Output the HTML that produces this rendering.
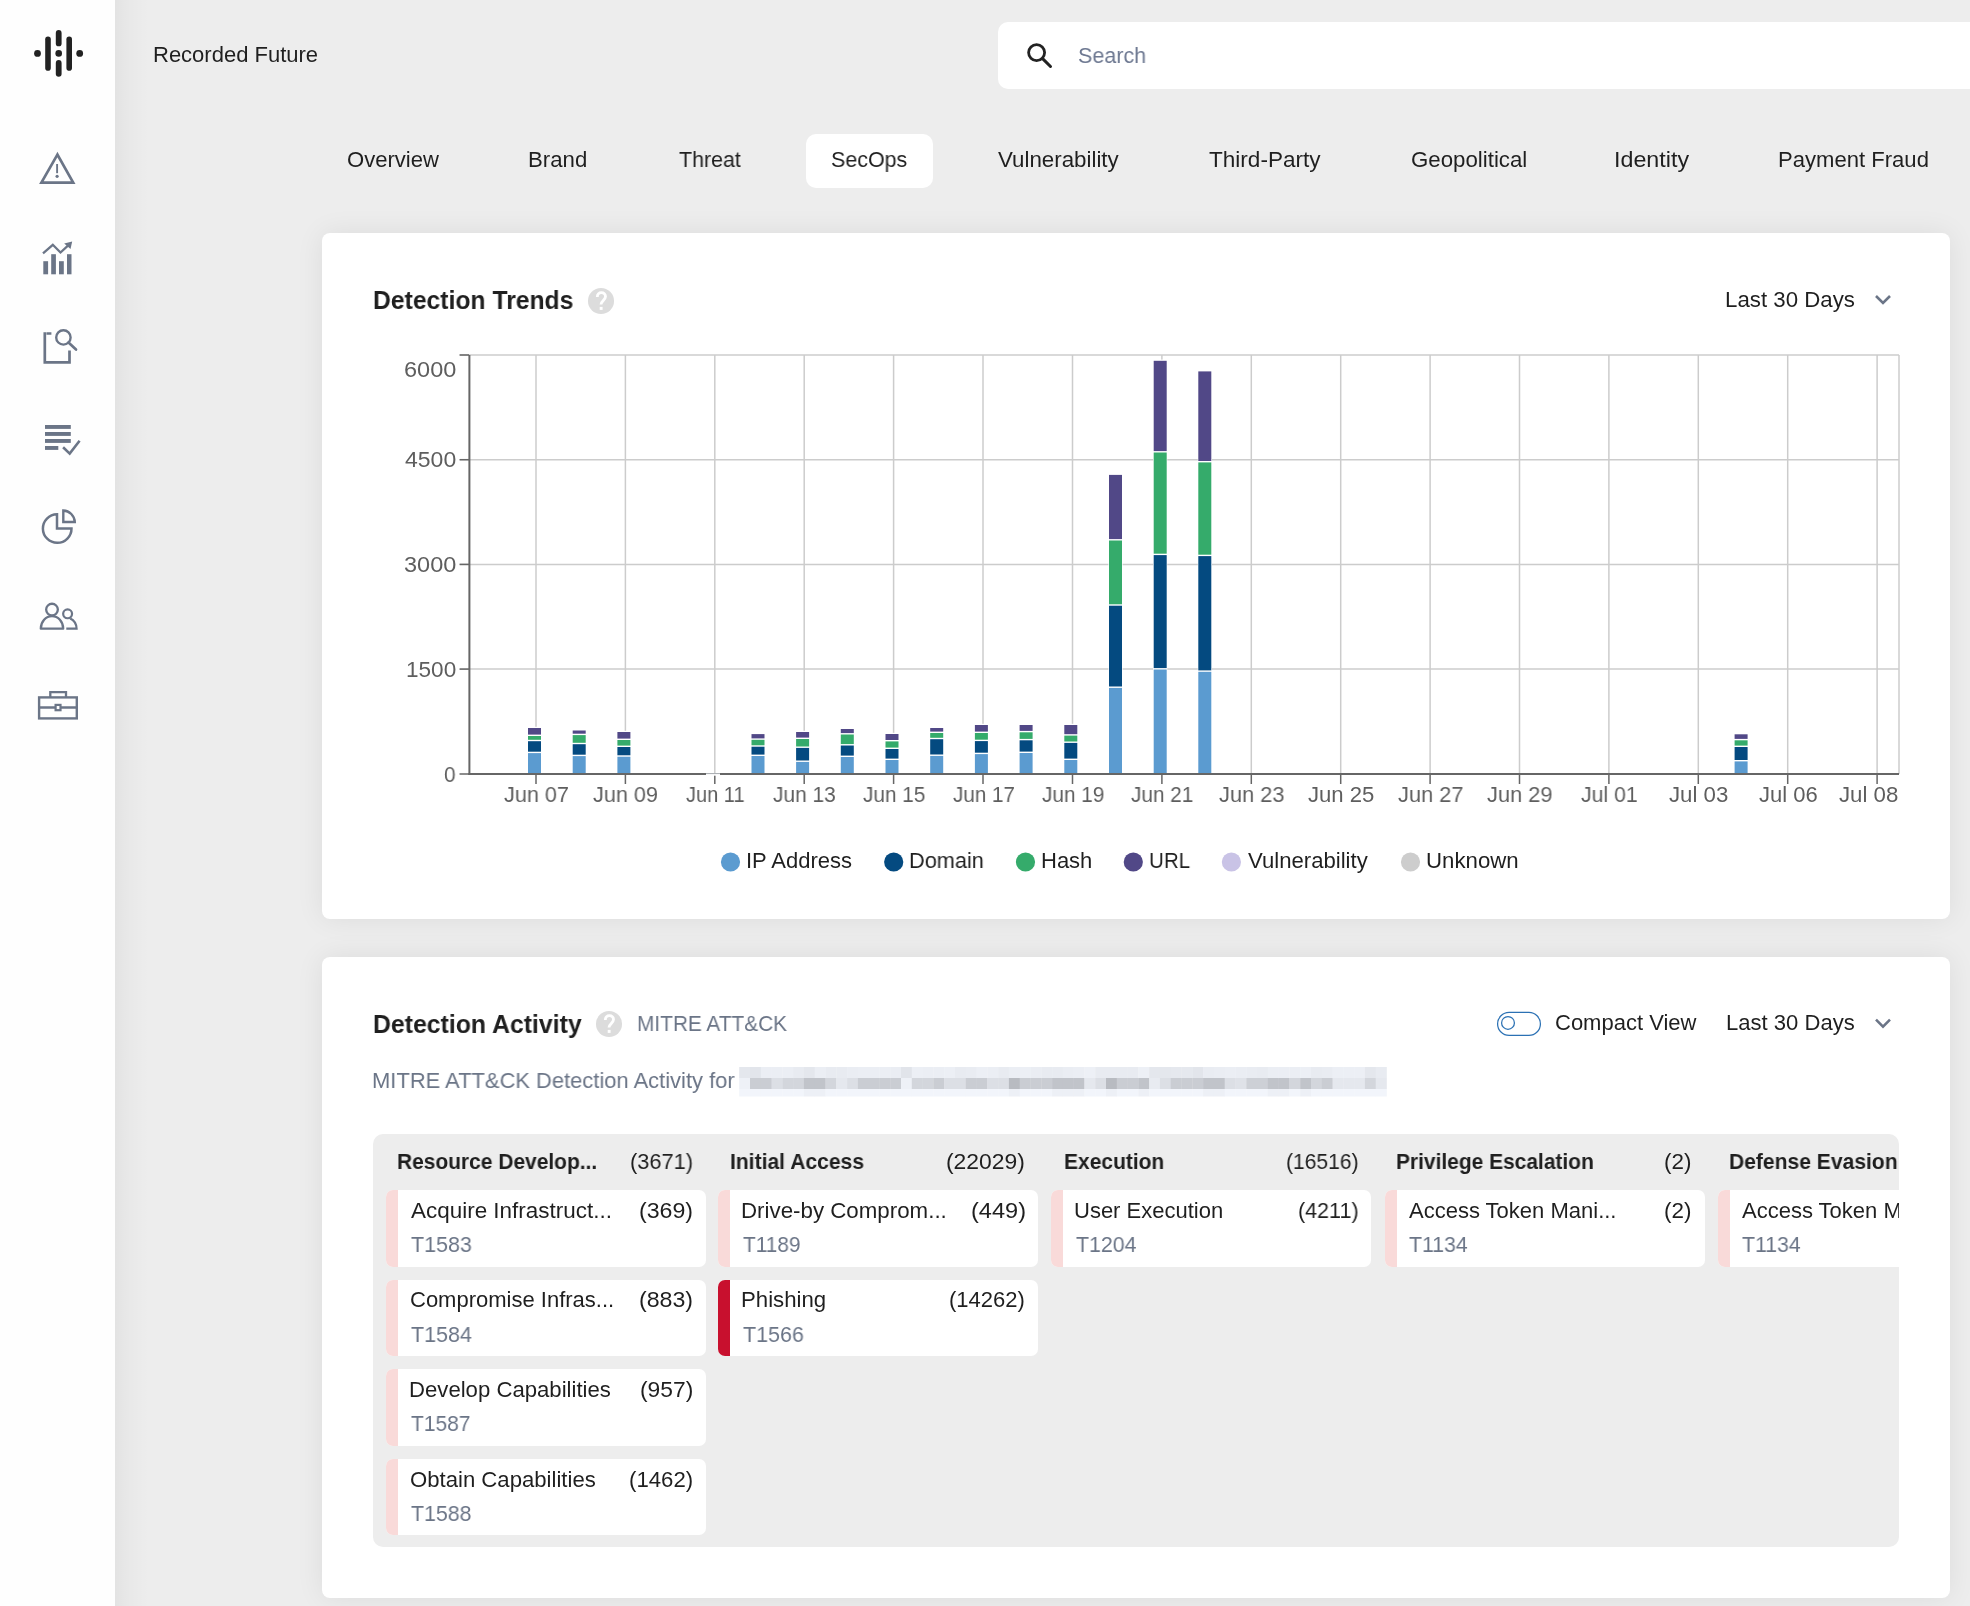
<!DOCTYPE html><html><head><meta charset='utf-8'><style>
*{margin:0;padding:0;box-sizing:border-box}
html,body{width:1970px;height:1606px;overflow:hidden}
body{background:#ededed;font-family:"Liberation Sans",sans-serif;position:relative}
.abs{position:absolute}
.t{position:absolute;white-space:nowrap;line-height:1;transform-origin:0 0;will-change:transform}
#side{position:absolute;left:0;top:0;width:115px;height:1606px;background:#fefefe}
#sideshadow{position:absolute;left:115px;top:0;width:34px;height:1606px;background:linear-gradient(to right,rgba(0,0,0,0.045),rgba(0,0,0,0.02) 40%,rgba(0,0,0,0))}
#search{position:absolute;left:998px;top:22px;width:990px;height:67px;background:#fff;border-radius:10px}
#tabsel{position:absolute;left:806.4px;top:134.2px;width:126.2px;height:53.9px;background:#fff;border-radius:10px}
.panel{position:absolute;left:322px;width:1628px;background:#fff;border-radius:8px;box-shadow:0 0 28px rgba(0,0,0,0.075)}
.help{position:absolute;width:26px;height:26px;border-radius:50%;background:#dcdcdc;color:#fff;font:bold 19px/26px "Liberation Sans",sans-serif;text-align:center}
#matrix{position:absolute;left:373px;top:1134.2px;width:1525.5px;height:413.2px;background:#ededed;border-radius:10px;overflow:hidden}
.card{position:absolute;width:320px;height:76.5px;background:#fff;border-radius:7px;overflow:hidden}
.card .bar{position:absolute;left:0;top:0;bottom:0;width:12px}
#blur{position:absolute;left:739px;top:1064px;width:648px;height:34px}
</style></head><body>
<div id=side></div><div id=sideshadow></div>

<svg class=abs style='left:0;top:0' width='115' height='760' viewBox='0 0 115 760'>
 <g fill='#222'>
  <circle cx='37.5' cy='53.4' r='3.4'/>
  <rect x='45.2' y='36.4' width='5.6' height='34.3' rx='2.8'/>
  <rect x='55.8' y='30' width='5.8' height='16.3' rx='2.9'/>
  <circle cx='58.7' cy='53.4' r='3.3'/>
  <rect x='55.8' y='60.1' width='5.8' height='16.6' rx='2.9'/>
  <rect x='66.4' y='36.4' width='5.6' height='34.3' rx='2.8'/>
  <circle cx='79.7' cy='53.4' r='3.4'/>
 </g>
 <g fill='none' stroke='#6b7587' stroke-width='2.7'>
  <path d='M57.4 154.6 L41.4 182.6 L73.2 182.6 Z' stroke-linejoin='miter'/>
  <line x1='57.1' y1='164' x2='57.1' y2='173.2' stroke-width='1.9'/>
  <polyline points='43,253.3 52.8,244.8 60.5,252.5 68.5,245.2' stroke-width='2.3'/>
  <path d='M46.5 333.5 H51.4 M44.8 332.2 V362.3 H69.5 V350.5'/>
  <circle cx='63.4' cy='337.4' r='7.2' stroke-width='2.4'/>
  <line x1='68.5' y1='342.5' x2='76' y2='349.5' stroke-linecap='round'/>
  <path d='M57 514.2 A14.3 14.3 0 1 0 71.5 528.4 H57 Z' stroke-width='2.5'/>
  <path d='M63.3 510.5 A12 12 0 0 1 74.8 522 H63.3 Z' stroke-width='2.4'/>
  <circle cx='52' cy='609.6' r='5.85' stroke-width='2.3'/>
  <path d='M40.8 628.7 A11.2 12.6 0 0 1 63.2 628.7 Z' stroke-width='2.3' stroke-linejoin='round'/>
  <circle cx='67.6' cy='613.8' r='4.45' stroke-width='2.2'/>
  <path d='M66.3 628.7 H76.6 A10.5 11.5 0 0 0 70.2 618.6' stroke-width='2.2'/>
  <rect x='39.1' y='697.4' width='37.7' height='21' stroke-width='2.4'/>
  <path d='M50.3 697.4 V692.1 H66 V697.4' stroke-width='2.3'/>
  <line x1='39.1' y1='707.5' x2='76.8' y2='707.5' stroke-width='2.3'/>
  <rect x='55.6' y='704.9' width='4.9' height='5.3' fill='#fff' stroke-width='2.2'/>
 </g>
 <g fill='#6b7587'>
  <circle cx='57.1' cy='176.3' r='1.6'/>
  <path d='M64.2 243.5 L72.2 241.6 L70.5 249 Z'/>
  <rect x='43.3' y='261.2' width='4.8' height='13.1'/>
  <rect x='51.2' y='254.2' width='4.7' height='20.1'/>
  <rect x='59' y='261.2' width='4.8' height='13.1'/>
  <rect x='67' y='254.2' width='4.5' height='20.1'/>
  <rect x='45' y='425' width='25.8' height='3.9'/>
  <rect x='45' y='432' width='25.8' height='3.9'/>
  <rect x='45' y='439' width='25.8' height='3.9'/>
  <rect x='45' y='446' width='13.3' height='3.9'/>
 </g>
 <polyline points='63.1,447.3 69.7,453.6 79.6,440.8' fill='none' stroke='#6b7587' stroke-width='2.6'/>
</svg>

<div id=search></div>
<svg class=abs style='left:1024.3px;top:41.3px' width='32' height='28' viewBox='0 0 32 28'>
 <circle cx='12.6' cy='11.6' r='8' fill='none' stroke='#222' stroke-width='2.8'/>
 <line x1='18.6' y1='17.6' x2='26.5' y2='25.5' stroke='#222' stroke-width='3' stroke-linecap='round'/>
</svg>
<div id=tabsel></div>
<div class=panel style='top:233px;height:686px'></div>
<div class=panel style='top:957px;height:641px'></div>
<svg class=abs style='left:585.8px;top:285.5px' width='30' height='30' viewBox='-15 -15 30 30'><circle r='13.05' fill='#dcdcdc'/><path d='M-3.7 -4.1 C-3.7 -6.9 -1.8 -8.4 0.4 -8.4 C2.8 -8.4 4.5 -6.8 4.5 -4.4 C4.5 -0.9 0 0 0 3.6' fill='none' stroke='#fff' stroke-width='2.8'/><rect x='-1.3' y='5.9' width='2.9' height='3' fill='#fff'/></svg>
<svg class=abs style='left:594.4px;top:1009.4000000000001px' width='30' height='30' viewBox='-15 -15 30 30'><circle r='13.05' fill='#dcdcdc'/><path d='M-3.7 -4.1 C-3.7 -6.9 -1.8 -8.4 0.4 -8.4 C2.8 -8.4 4.5 -6.8 4.5 -4.4 C4.5 -0.9 0 0 0 3.6' fill='none' stroke='#fff' stroke-width='2.8'/><rect x='-1.3' y='5.9' width='2.9' height='3' fill='#fff'/></svg>
<svg class=abs style='left:1870px;top:290px' width='26' height='20' viewBox='0 0 26 20'><polyline points='6,6 13,13 20,6' fill='none' stroke='#6b7587' stroke-width='2.6'/></svg>
<svg class=abs style='left:1870px;top:1013px' width='26' height='20' viewBox='0 0 26 20'><polyline points='6,6.6 13,13.6 20,6.6' fill='none' stroke='#6b7587' stroke-width='2.6'/></svg>
<svg class=abs style='left:1490px;top:1005px' width='60' height='40' viewBox='0 0 60 40'>
 <rect x='7.6' y='7.4' width='42.8' height='23' rx='11.5' fill='#fff' stroke='#2b71b4' stroke-width='1.25'/>
 <circle cx='18' cy='17.9' r='6.4' fill='#fff' stroke='#2b71b4' stroke-width='1.25'/>
</svg>
<svg class=abs style='left:0;top:0' width='1970' height='1606' viewBox='0 0 1970 1606'><line x1='460' y1='355' x2='1899' y2='355' stroke='#cccccc' stroke-width='1.5'/><line x1='460' y1='459.7' x2='1899' y2='459.7' stroke='#cccccc' stroke-width='1.5'/><line x1='460' y1='564.4' x2='1899' y2='564.4' stroke='#cccccc' stroke-width='1.5'/><line x1='460' y1='669.1' x2='1899' y2='669.1' stroke='#cccccc' stroke-width='1.5'/><line x1='536.0' y1='355' x2='536.0' y2='774' stroke='#cccccc' stroke-width='1.5'/><line x1='625.4' y1='355' x2='625.4' y2='774' stroke='#cccccc' stroke-width='1.5'/><line x1='714.8' y1='355' x2='714.8' y2='774' stroke='#cccccc' stroke-width='1.5'/><line x1='804.2' y1='355' x2='804.2' y2='774' stroke='#cccccc' stroke-width='1.5'/><line x1='893.6' y1='355' x2='893.6' y2='774' stroke='#cccccc' stroke-width='1.5'/><line x1='983.0' y1='355' x2='983.0' y2='774' stroke='#cccccc' stroke-width='1.5'/><line x1='1072.5' y1='355' x2='1072.5' y2='774' stroke='#cccccc' stroke-width='1.5'/><line x1='1161.9' y1='355' x2='1161.9' y2='774' stroke='#cccccc' stroke-width='1.5'/><line x1='1251.3' y1='355' x2='1251.3' y2='774' stroke='#cccccc' stroke-width='1.5'/><line x1='1340.7' y1='355' x2='1340.7' y2='774' stroke='#cccccc' stroke-width='1.5'/><line x1='1430.1' y1='355' x2='1430.1' y2='774' stroke='#cccccc' stroke-width='1.5'/><line x1='1519.5' y1='355' x2='1519.5' y2='774' stroke='#cccccc' stroke-width='1.5'/><line x1='1608.9' y1='355' x2='1608.9' y2='774' stroke='#cccccc' stroke-width='1.5'/><line x1='1698.3' y1='355' x2='1698.3' y2='774' stroke='#cccccc' stroke-width='1.5'/><line x1='1787.7' y1='355' x2='1787.7' y2='774' stroke='#cccccc' stroke-width='1.5'/><line x1='1877.1' y1='355' x2='1877.1' y2='774' stroke='#cccccc' stroke-width='1.5'/><line x1='1899' y1='355' x2='1899' y2='774' stroke='#cccccc' stroke-width='1.5'/><rect x='527.4' y='726.8' width='14.2' height='47.2' fill='#fff'/><rect x='528.0' y='753.1' width='13' height='20.9' fill='#5b9bd0'/><rect x='528.0' y='741.2' width='13' height='10.5' fill='#044a80'/><rect x='528.0' y='736.0' width='13' height='3.8' fill='#35ab6b'/><rect x='528.0' y='728.0' width='13' height='6.6' fill='#514887'/><rect x='572.1' y='729.3' width='14.2' height='44.7' fill='#fff'/><rect x='572.7' y='756.1' width='13' height='17.9' fill='#5b9bd0'/><rect x='572.7' y='744.2' width='13' height='10.5' fill='#044a80'/><rect x='572.7' y='735.1' width='13' height='7.7' fill='#35ab6b'/><rect x='572.7' y='730.5' width='13' height='3.2' fill='#514887'/><rect x='616.8' y='730.8' width='14.2' height='43.2' fill='#fff'/><rect x='617.4' y='756.7' width='13' height='17.3' fill='#5b9bd0'/><rect x='617.4' y='747.0' width='13' height='8.3' fill='#044a80'/><rect x='617.4' y='740.0' width='13' height='5.6' fill='#35ab6b'/><rect x='617.4' y='732.0' width='13' height='6.6' fill='#514887'/><rect x='750.9' y='732.9' width='14.2' height='41.1' fill='#fff'/><rect x='751.5' y='756.0' width='13' height='18.0' fill='#5b9bd0'/><rect x='751.5' y='746.7' width='13' height='7.9' fill='#044a80'/><rect x='751.5' y='739.8' width='13' height='5.5' fill='#35ab6b'/><rect x='751.5' y='734.1' width='13' height='4.3' fill='#514887'/><rect x='795.5' y='730.8' width='14.2' height='43.2' fill='#fff'/><rect x='796.1' y='761.9' width='13' height='12.1' fill='#5b9bd0'/><rect x='796.1' y='747.9' width='13' height='12.6' fill='#044a80'/><rect x='796.1' y='739.0' width='13' height='7.5' fill='#35ab6b'/><rect x='796.1' y='732.0' width='13' height='5.6' fill='#514887'/><rect x='840.2' y='727.8' width='14.2' height='46.2' fill='#fff'/><rect x='840.8' y='757.0' width='13' height='17.0' fill='#5b9bd0'/><rect x='840.8' y='745.5' width='13' height='10.1' fill='#044a80'/><rect x='840.8' y='734.5' width='13' height='9.6' fill='#35ab6b'/><rect x='840.8' y='729.0' width='13' height='4.1' fill='#514887'/><rect x='884.9' y='732.8' width='14.2' height='41.2' fill='#fff'/><rect x='885.5' y='760.0' width='13' height='14.0' fill='#5b9bd0'/><rect x='885.5' y='749.0' width='13' height='9.6' fill='#044a80'/><rect x='885.5' y='741.4' width='13' height='6.2' fill='#35ab6b'/><rect x='885.5' y='734.0' width='13' height='6.0' fill='#514887'/><rect x='929.6' y='726.8' width='14.2' height='47.2' fill='#fff'/><rect x='930.2' y='755.9' width='13' height='18.1' fill='#5b9bd0'/><rect x='930.2' y='739.2' width='13' height='15.3' fill='#044a80'/><rect x='930.2' y='733.0' width='13' height='4.8' fill='#35ab6b'/><rect x='930.2' y='728.0' width='13' height='3.6' fill='#514887'/><rect x='974.3' y='723.8' width='14.2' height='50.2' fill='#fff'/><rect x='974.9' y='754.1' width='13' height='19.9' fill='#5b9bd0'/><rect x='974.9' y='741.1' width='13' height='11.6' fill='#044a80'/><rect x='974.9' y='733.0' width='13' height='6.7' fill='#35ab6b'/><rect x='974.9' y='725.0' width='13' height='6.6' fill='#514887'/><rect x='1019.0' y='723.8' width='14.2' height='50.2' fill='#fff'/><rect x='1019.6' y='753.0' width='13' height='21.0' fill='#5b9bd0'/><rect x='1019.6' y='740.3' width='13' height='11.3' fill='#044a80'/><rect x='1019.6' y='732.3' width='13' height='6.6' fill='#35ab6b'/><rect x='1019.6' y='725.0' width='13' height='5.9' fill='#514887'/><rect x='1063.7' y='723.8' width='14.2' height='50.2' fill='#fff'/><rect x='1064.3' y='760.0' width='13' height='14.0' fill='#5b9bd0'/><rect x='1064.3' y='742.9' width='13' height='15.7' fill='#044a80'/><rect x='1064.3' y='735.6' width='13' height='5.9' fill='#35ab6b'/><rect x='1064.3' y='725.0' width='13' height='9.2' fill='#514887'/><rect x='1108.4' y='473.7' width='14.2' height='300.3' fill='#fff'/><rect x='1109.0' y='687.9' width='13' height='86.1' fill='#5b9bd0'/><rect x='1109.0' y='605.7' width='13' height='80.8' fill='#044a80'/><rect x='1109.0' y='540.5' width='13' height='63.8' fill='#35ab6b'/><rect x='1109.0' y='474.9' width='13' height='64.2' fill='#514887'/><rect x='1153.1' y='359.6' width='14.2' height='414.4' fill='#fff'/><rect x='1153.7' y='669.5' width='13' height='104.5' fill='#5b9bd0'/><rect x='1153.7' y='555.1' width='13' height='113.0' fill='#044a80'/><rect x='1153.7' y='452.5' width='13' height='101.2' fill='#35ab6b'/><rect x='1153.7' y='360.8' width='13' height='90.3' fill='#514887'/><rect x='1197.8' y='370.2' width='14.2' height='403.8' fill='#fff'/><rect x='1198.3' y='671.8' width='13' height='102.2' fill='#5b9bd0'/><rect x='1198.3' y='556.1' width='13' height='114.3' fill='#044a80'/><rect x='1198.3' y='462.4' width='13' height='92.3' fill='#35ab6b'/><rect x='1198.3' y='371.4' width='13' height='89.6' fill='#514887'/><rect x='1734.0' y='733.1' width='14.2' height='40.9' fill='#fff'/><rect x='1734.6' y='761.4' width='13' height='12.6' fill='#5b9bd0'/><rect x='1734.6' y='747.0' width='13' height='13.0' fill='#044a80'/><rect x='1734.6' y='740.3' width='13' height='5.3' fill='#35ab6b'/><rect x='1734.6' y='734.3' width='13' height='4.6' fill='#514887'/><line x1='469.4' y1='355' x2='469.4' y2='775' stroke='#666666' stroke-width='2'/><line x1='468.5' y1='774' x2='1899' y2='774' stroke='#666666' stroke-width='2'/><line x1='459.5' y1='355' x2='469' y2='355' stroke='#666666' stroke-width='1.5'/><line x1='459.5' y1='459.7' x2='469' y2='459.7' stroke='#666666' stroke-width='1.5'/><line x1='459.5' y1='564.4' x2='469' y2='564.4' stroke='#666666' stroke-width='1.5'/><line x1='459.5' y1='669.1' x2='469' y2='669.1' stroke='#666666' stroke-width='1.5'/><line x1='459.5' y1='774' x2='469' y2='774' stroke='#666666' stroke-width='1.5'/><line x1='536.0' y1='775' x2='536.0' y2='784' stroke='#666666' stroke-width='1.5'/><line x1='625.4' y1='775' x2='625.4' y2='784' stroke='#666666' stroke-width='1.5'/><line x1='714.8' y1='775' x2='714.8' y2='784' stroke='#666666' stroke-width='1.5'/><line x1='804.2' y1='775' x2='804.2' y2='784' stroke='#666666' stroke-width='1.5'/><line x1='893.6' y1='775' x2='893.6' y2='784' stroke='#666666' stroke-width='1.5'/><line x1='983.0' y1='775' x2='983.0' y2='784' stroke='#666666' stroke-width='1.5'/><line x1='1072.5' y1='775' x2='1072.5' y2='784' stroke='#666666' stroke-width='1.5'/><line x1='1161.9' y1='775' x2='1161.9' y2='784' stroke='#666666' stroke-width='1.5'/><line x1='1251.3' y1='775' x2='1251.3' y2='784' stroke='#666666' stroke-width='1.5'/><line x1='1340.7' y1='775' x2='1340.7' y2='784' stroke='#666666' stroke-width='1.5'/><line x1='1430.1' y1='775' x2='1430.1' y2='784' stroke='#666666' stroke-width='1.5'/><line x1='1519.5' y1='775' x2='1519.5' y2='784' stroke='#666666' stroke-width='1.5'/><line x1='1608.9' y1='775' x2='1608.9' y2='784' stroke='#666666' stroke-width='1.5'/><line x1='1698.3' y1='775' x2='1698.3' y2='784' stroke='#666666' stroke-width='1.5'/><line x1='1787.7' y1='775' x2='1787.7' y2='784' stroke='#666666' stroke-width='1.5'/><line x1='1877.1' y1='775' x2='1877.1' y2='784' stroke='#666666' stroke-width='1.5'/><rect x='706' y='773.3' width='14' height='2.4' fill='#fff'/><line x1='706' y1='773.6' x2='720' y2='773.6' stroke='#a3a8ad' stroke-width='0.9'/><circle cx='730.5' cy='862' r='9.6' fill='#5b9bd0'/><circle cx='893.7' cy='862' r='9.6' fill='#044a80'/><circle cx='1025.5' cy='862' r='9.6' fill='#35ab6b'/><circle cx='1133.3' cy='862' r='9.6' fill='#514887'/><circle cx='1231.4' cy='862' r='9.6' fill='#c9c3e6'/><circle cx='1410.5' cy='862' r='9.6' fill='#cdcdcd'/></svg>
<svg class=abs style='left:0;top:0' width='1970' height='1606'><rect x='739.2' y='1067' width='11.1' height='11.1' fill='rgb(228,231,237)'/><rect x='739.2' y='1078' width='11.1' height='11' fill='rgb(238,241,247)'/><rect x='739.2' y='1089' width='11.1' height='7.5' fill='rgb(242,245,251)'/><rect x='750.0' y='1067' width='11.1' height='11.1' fill='rgb(226,229,235)'/><rect x='750.0' y='1078' width='11.1' height='11' fill='rgb(202,205,211)'/><rect x='750.0' y='1089' width='11.1' height='7.5' fill='rgb(242,245,251)'/><rect x='760.8' y='1067' width='11.1' height='11.1' fill='rgb(235,238,244)'/><rect x='760.8' y='1078' width='11.1' height='11' fill='rgb(202,205,211)'/><rect x='760.8' y='1089' width='11.1' height='7.5' fill='rgb(242,245,251)'/><rect x='771.6' y='1067' width='11.1' height='11.1' fill='rgb(235,238,244)'/><rect x='771.6' y='1078' width='11.1' height='11' fill='rgb(220,223,229)'/><rect x='771.6' y='1089' width='11.1' height='7.5' fill='rgb(242,245,251)'/><rect x='782.4' y='1067' width='11.1' height='11.1' fill='rgb(235,238,244)'/><rect x='782.4' y='1078' width='11.1' height='11' fill='rgb(211,214,220)'/><rect x='782.4' y='1089' width='11.1' height='7.5' fill='rgb(242,245,251)'/><rect x='793.1' y='1067' width='11.1' height='11.1' fill='rgb(232,235,241)'/><rect x='793.1' y='1078' width='11.1' height='11' fill='rgb(211,214,220)'/><rect x='793.1' y='1089' width='11.1' height='7.5' fill='rgb(242,245,251)'/><rect x='803.9' y='1067' width='11.1' height='11.1' fill='rgb(228,231,237)'/><rect x='803.9' y='1078' width='11.1' height='11' fill='rgb(193,196,202)'/><rect x='803.9' y='1089' width='11.1' height='7.5' fill='rgb(237,240,246)'/><rect x='814.7' y='1067' width='11.1' height='11.1' fill='rgb(235,238,244)'/><rect x='814.7' y='1078' width='11.1' height='11' fill='rgb(193,196,202)'/><rect x='814.7' y='1089' width='11.1' height='7.5' fill='rgb(237,240,246)'/><rect x='825.5' y='1067' width='11.1' height='11.1' fill='rgb(232,235,241)'/><rect x='825.5' y='1078' width='11.1' height='11' fill='rgb(211,214,220)'/><rect x='825.5' y='1089' width='11.1' height='7.5' fill='rgb(242,245,251)'/><rect x='836.3' y='1067' width='11.1' height='11.1' fill='rgb(232,235,241)'/><rect x='836.3' y='1078' width='11.1' height='11' fill='rgb(229,232,238)'/><rect x='836.3' y='1089' width='11.1' height='7.5' fill='rgb(242,245,251)'/><rect x='847.1' y='1067' width='11.1' height='11.1' fill='rgb(234,237,243)'/><rect x='847.1' y='1078' width='11.1' height='11' fill='rgb(220,223,229)'/><rect x='847.1' y='1089' width='11.1' height='7.5' fill='rgb(242,245,251)'/><rect x='857.9' y='1067' width='11.1' height='11.1' fill='rgb(235,238,244)'/><rect x='857.9' y='1078' width='11.1' height='11' fill='rgb(202,205,211)'/><rect x='857.9' y='1089' width='11.1' height='7.5' fill='rgb(242,245,251)'/><rect x='868.7' y='1067' width='11.1' height='11.1' fill='rgb(235,238,244)'/><rect x='868.7' y='1078' width='11.1' height='11' fill='rgb(202,205,211)'/><rect x='868.7' y='1089' width='11.1' height='7.5' fill='rgb(242,245,251)'/><rect x='879.4' y='1067' width='11.1' height='11.1' fill='rgb(235,238,244)'/><rect x='879.4' y='1078' width='11.1' height='11' fill='rgb(202,205,211)'/><rect x='879.4' y='1089' width='11.1' height='7.5' fill='rgb(242,245,251)'/><rect x='890.2' y='1067' width='11.1' height='11.1' fill='rgb(234,237,243)'/><rect x='890.2' y='1078' width='11.1' height='11' fill='rgb(202,205,211)'/><rect x='890.2' y='1089' width='11.1' height='7.5' fill='rgb(242,245,251)'/><rect x='901.0' y='1067' width='11.1' height='11.1' fill='rgb(225,228,234)'/><rect x='901.0' y='1078' width='11.1' height='11' fill='rgb(238,241,247)'/><rect x='901.0' y='1089' width='11.1' height='7.5' fill='rgb(242,245,251)'/><rect x='911.8' y='1067' width='11.1' height='11.1' fill='rgb(236,239,245)'/><rect x='911.8' y='1078' width='11.1' height='11' fill='rgb(211,214,220)'/><rect x='911.8' y='1089' width='11.1' height='7.5' fill='rgb(242,245,251)'/><rect x='922.6' y='1067' width='11.1' height='11.1' fill='rgb(235,238,244)'/><rect x='922.6' y='1078' width='11.1' height='11' fill='rgb(211,214,220)'/><rect x='922.6' y='1089' width='11.1' height='7.5' fill='rgb(242,245,251)'/><rect x='933.4' y='1067' width='11.1' height='11.1' fill='rgb(235,238,244)'/><rect x='933.4' y='1078' width='11.1' height='11' fill='rgb(202,205,211)'/><rect x='933.4' y='1089' width='11.1' height='7.5' fill='rgb(242,245,251)'/><rect x='944.2' y='1067' width='11.1' height='11.1' fill='rgb(236,239,245)'/><rect x='944.2' y='1078' width='11.1' height='11' fill='rgb(220,223,229)'/><rect x='944.2' y='1089' width='11.1' height='7.5' fill='rgb(242,245,251)'/><rect x='955.0' y='1067' width='11.1' height='11.1' fill='rgb(232,235,241)'/><rect x='955.0' y='1078' width='11.1' height='11' fill='rgb(220,223,229)'/><rect x='955.0' y='1089' width='11.1' height='7.5' fill='rgb(242,245,251)'/><rect x='965.8' y='1067' width='11.1' height='11.1' fill='rgb(233,236,242)'/><rect x='965.8' y='1078' width='11.1' height='11' fill='rgb(202,205,211)'/><rect x='965.8' y='1089' width='11.1' height='7.5' fill='rgb(242,245,251)'/><rect x='976.5' y='1067' width='11.1' height='11.1' fill='rgb(236,239,245)'/><rect x='976.5' y='1078' width='11.1' height='11' fill='rgb(202,205,211)'/><rect x='976.5' y='1089' width='11.1' height='7.5' fill='rgb(242,245,251)'/><rect x='987.3' y='1067' width='11.1' height='11.1' fill='rgb(235,238,244)'/><rect x='987.3' y='1078' width='11.1' height='11' fill='rgb(220,223,229)'/><rect x='987.3' y='1089' width='11.1' height='7.5' fill='rgb(242,245,251)'/><rect x='998.1' y='1067' width='11.1' height='11.1' fill='rgb(232,235,241)'/><rect x='998.1' y='1078' width='11.1' height='11' fill='rgb(220,223,229)'/><rect x='998.1' y='1089' width='11.1' height='7.5' fill='rgb(242,245,251)'/><rect x='1008.9' y='1067' width='11.1' height='11.1' fill='rgb(235,238,244)'/><rect x='1008.9' y='1078' width='11.1' height='11' fill='rgb(184,187,193)'/><rect x='1008.9' y='1089' width='11.1' height='7.5' fill='rgb(237,240,246)'/><rect x='1019.7' y='1067' width='11.1' height='11.1' fill='rgb(236,239,245)'/><rect x='1019.7' y='1078' width='11.1' height='11' fill='rgb(202,205,211)'/><rect x='1019.7' y='1089' width='11.1' height='7.5' fill='rgb(242,245,251)'/><rect x='1030.5' y='1067' width='11.1' height='11.1' fill='rgb(234,237,243)'/><rect x='1030.5' y='1078' width='11.1' height='11' fill='rgb(202,205,211)'/><rect x='1030.5' y='1089' width='11.1' height='7.5' fill='rgb(242,245,251)'/><rect x='1041.3' y='1067' width='11.1' height='11.1' fill='rgb(232,235,241)'/><rect x='1041.3' y='1078' width='11.1' height='11' fill='rgb(202,205,211)'/><rect x='1041.3' y='1089' width='11.1' height='7.5' fill='rgb(242,245,251)'/><rect x='1052.1' y='1067' width='11.1' height='11.1' fill='rgb(232,235,241)'/><rect x='1052.1' y='1078' width='11.1' height='11' fill='rgb(193,196,202)'/><rect x='1052.1' y='1089' width='11.1' height='7.5' fill='rgb(237,240,246)'/><rect x='1062.8' y='1067' width='11.1' height='11.1' fill='rgb(234,237,243)'/><rect x='1062.8' y='1078' width='11.1' height='11' fill='rgb(193,196,202)'/><rect x='1062.8' y='1089' width='11.1' height='7.5' fill='rgb(237,240,246)'/><rect x='1073.6' y='1067' width='11.1' height='11.1' fill='rgb(235,238,244)'/><rect x='1073.6' y='1078' width='11.1' height='11' fill='rgb(193,196,202)'/><rect x='1073.6' y='1089' width='11.1' height='7.5' fill='rgb(237,240,246)'/><rect x='1084.4' y='1067' width='11.1' height='11.1' fill='rgb(237,240,246)'/><rect x='1084.4' y='1078' width='11.1' height='11' fill='rgb(229,232,238)'/><rect x='1084.4' y='1089' width='11.1' height='7.5' fill='rgb(242,245,251)'/><rect x='1095.2' y='1067' width='11.1' height='11.1' fill='rgb(232,235,241)'/><rect x='1095.2' y='1078' width='11.1' height='11' fill='rgb(220,223,229)'/><rect x='1095.2' y='1089' width='11.1' height='7.5' fill='rgb(242,245,251)'/><rect x='1106.0' y='1067' width='11.1' height='11.1' fill='rgb(232,235,241)'/><rect x='1106.0' y='1078' width='11.1' height='11' fill='rgb(184,187,193)'/><rect x='1106.0' y='1089' width='11.1' height='7.5' fill='rgb(237,240,246)'/><rect x='1116.8' y='1067' width='11.1' height='11.1' fill='rgb(232,235,241)'/><rect x='1116.8' y='1078' width='11.1' height='11' fill='rgb(202,205,211)'/><rect x='1116.8' y='1089' width='11.1' height='7.5' fill='rgb(242,245,251)'/><rect x='1127.6' y='1067' width='11.1' height='11.1' fill='rgb(232,235,241)'/><rect x='1127.6' y='1078' width='11.1' height='11' fill='rgb(202,205,211)'/><rect x='1127.6' y='1089' width='11.1' height='7.5' fill='rgb(242,245,251)'/><rect x='1138.4' y='1067' width='11.1' height='11.1' fill='rgb(237,240,246)'/><rect x='1138.4' y='1078' width='11.1' height='11' fill='rgb(193,196,202)'/><rect x='1138.4' y='1089' width='11.1' height='7.5' fill='rgb(237,240,246)'/><rect x='1149.2' y='1067' width='11.1' height='11.1' fill='rgb(228,231,237)'/><rect x='1149.2' y='1078' width='11.1' height='11' fill='rgb(232,235,241)'/><rect x='1149.2' y='1089' width='11.1' height='7.5' fill='rgb(242,245,251)'/><rect x='1159.9' y='1067' width='11.1' height='11.1' fill='rgb(228,231,237)'/><rect x='1159.9' y='1078' width='11.1' height='11' fill='rgb(220,223,229)'/><rect x='1159.9' y='1089' width='11.1' height='7.5' fill='rgb(242,245,251)'/><rect x='1170.7' y='1067' width='11.1' height='11.1' fill='rgb(229,232,238)'/><rect x='1170.7' y='1078' width='11.1' height='11' fill='rgb(202,205,211)'/><rect x='1170.7' y='1089' width='11.1' height='7.5' fill='rgb(242,245,251)'/><rect x='1181.5' y='1067' width='11.1' height='11.1' fill='rgb(229,232,238)'/><rect x='1181.5' y='1078' width='11.1' height='11' fill='rgb(202,205,211)'/><rect x='1181.5' y='1089' width='11.1' height='7.5' fill='rgb(242,245,251)'/><rect x='1192.3' y='1067' width='11.1' height='11.1' fill='rgb(226,229,235)'/><rect x='1192.3' y='1078' width='11.1' height='11' fill='rgb(202,205,211)'/><rect x='1192.3' y='1089' width='11.1' height='7.5' fill='rgb(242,245,251)'/><rect x='1203.1' y='1067' width='11.1' height='11.1' fill='rgb(233,236,242)'/><rect x='1203.1' y='1078' width='11.1' height='11' fill='rgb(193,196,202)'/><rect x='1203.1' y='1089' width='11.1' height='7.5' fill='rgb(237,240,246)'/><rect x='1213.9' y='1067' width='11.1' height='11.1' fill='rgb(234,237,243)'/><rect x='1213.9' y='1078' width='11.1' height='11' fill='rgb(193,196,202)'/><rect x='1213.9' y='1089' width='11.1' height='7.5' fill='rgb(237,240,246)'/><rect x='1224.7' y='1067' width='11.1' height='11.1' fill='rgb(235,238,244)'/><rect x='1224.7' y='1078' width='11.1' height='11' fill='rgb(220,223,229)'/><rect x='1224.7' y='1089' width='11.1' height='7.5' fill='rgb(242,245,251)'/><rect x='1235.5' y='1067' width='11.1' height='11.1' fill='rgb(234,237,243)'/><rect x='1235.5' y='1078' width='11.1' height='11' fill='rgb(223,226,232)'/><rect x='1235.5' y='1089' width='11.1' height='7.5' fill='rgb(242,245,251)'/><rect x='1246.3' y='1067' width='11.1' height='11.1' fill='rgb(233,236,242)'/><rect x='1246.3' y='1078' width='11.1' height='11' fill='rgb(205,208,214)'/><rect x='1246.3' y='1089' width='11.1' height='7.5' fill='rgb(242,245,251)'/><rect x='1257.0' y='1067' width='11.1' height='11.1' fill='rgb(232,235,241)'/><rect x='1257.0' y='1078' width='11.1' height='11' fill='rgb(205,208,214)'/><rect x='1257.0' y='1089' width='11.1' height='7.5' fill='rgb(242,245,251)'/><rect x='1267.8' y='1067' width='11.1' height='11.1' fill='rgb(235,238,244)'/><rect x='1267.8' y='1078' width='11.1' height='11' fill='rgb(193,196,202)'/><rect x='1267.8' y='1089' width='11.1' height='7.5' fill='rgb(237,240,246)'/><rect x='1278.6' y='1067' width='11.1' height='11.1' fill='rgb(235,238,244)'/><rect x='1278.6' y='1078' width='11.1' height='11' fill='rgb(193,196,202)'/><rect x='1278.6' y='1089' width='11.1' height='7.5' fill='rgb(237,240,246)'/><rect x='1289.4' y='1067' width='11.1' height='11.1' fill='rgb(235,238,244)'/><rect x='1289.4' y='1078' width='11.1' height='11' fill='rgb(211,214,220)'/><rect x='1289.4' y='1089' width='11.1' height='7.5' fill='rgb(242,245,251)'/><rect x='1300.2' y='1067' width='11.1' height='11.1' fill='rgb(236,239,245)'/><rect x='1300.2' y='1078' width='11.1' height='11' fill='rgb(193,196,202)'/><rect x='1300.2' y='1089' width='11.1' height='7.5' fill='rgb(237,240,246)'/><rect x='1311.0' y='1067' width='11.1' height='11.1' fill='rgb(232,235,241)'/><rect x='1311.0' y='1078' width='11.1' height='11' fill='rgb(211,214,220)'/><rect x='1311.0' y='1089' width='11.1' height='7.5' fill='rgb(242,245,251)'/><rect x='1321.8' y='1067' width='11.1' height='11.1' fill='rgb(233,236,242)'/><rect x='1321.8' y='1078' width='11.1' height='11' fill='rgb(202,205,211)'/><rect x='1321.8' y='1089' width='11.1' height='7.5' fill='rgb(242,245,251)'/><rect x='1332.6' y='1067' width='11.1' height='11.1' fill='rgb(236,239,245)'/><rect x='1332.6' y='1078' width='11.1' height='11' fill='rgb(229,232,238)'/><rect x='1332.6' y='1089' width='11.1' height='7.5' fill='rgb(242,245,251)'/><rect x='1343.3' y='1067' width='11.1' height='11.1' fill='rgb(236,239,245)'/><rect x='1343.3' y='1078' width='11.1' height='11' fill='rgb(229,232,238)'/><rect x='1343.3' y='1089' width='11.1' height='7.5' fill='rgb(242,245,251)'/><rect x='1354.1' y='1067' width='11.1' height='11.1' fill='rgb(236,239,245)'/><rect x='1354.1' y='1078' width='11.1' height='11' fill='rgb(229,232,238)'/><rect x='1354.1' y='1089' width='11.1' height='7.5' fill='rgb(242,245,251)'/><rect x='1364.9' y='1067' width='11.1' height='11.1' fill='rgb(228,231,237)'/><rect x='1364.9' y='1078' width='11.1' height='11' fill='rgb(211,214,220)'/><rect x='1364.9' y='1089' width='11.1' height='7.5' fill='rgb(242,245,251)'/><rect x='1375.7' y='1067' width='11.1' height='11.1' fill='rgb(232,235,241)'/><rect x='1375.7' y='1078' width='11.1' height='11' fill='rgb(229,232,238)'/><rect x='1375.7' y='1089' width='11.1' height='7.5' fill='rgb(242,245,251)'/></svg>
<div id=matrix></div>
<div class=card style='left:386px;top:1190.2px'><div class=bar style='background:#f9dad9'></div></div><div class=card style='left:386px;top:1279.75px'><div class=bar style='background:#f9dad9'></div></div><div class=card style='left:386px;top:1369.3px'><div class=bar style='background:#f9dad9'></div></div><div class=card style='left:386px;top:1458.85px'><div class=bar style='background:#f9dad9'></div></div><div class=card style='left:718.4px;top:1190.2px'><div class=bar style='background:#f9dad9'></div></div><div class=card style='left:718.4px;top:1279.75px'><div class=bar style='background:#c8102e'></div></div><div class=card style='left:1051.3px;top:1190.2px'><div class=bar style='background:#f9dad9'></div></div><div class=card style='left:1384.5px;top:1190.2px'><div class=bar style='background:#f9dad9'></div></div>
<div class=t style="left:152.8px;top:44.2px;font-size:22px;color:#1f1f1f">Recorded Future</div><div class=t style="left:1077.62px;top:45px;font-size:22px;color:#6d7891;transform:scaleX(0.9765)">Search</div><div class=t style="left:347px;top:149.3px;font-size:22px;color:#1f1f1f;transform:scaleX(1.0033)">Overview</div><div class=t style="left:528.28px;top:149.3px;font-size:22px;color:#1f1f1f;transform:scaleX(1.0089)">Brand</div><div class=t style="left:678.5px;top:149.3px;font-size:22px;color:#1f1f1f;transform:scaleX(0.9719)">Threat</div><div class=t style="left:831.03px;top:149.3px;font-size:22px;color:#1f1f1f;transform:scaleX(0.9740)">SecOps</div><div class=t style="left:997.6px;top:149.3px;font-size:22px;color:#1f1f1f;transform:scaleX(1.0143)">Vulnerability</div><div class=t style="left:1209px;top:149.3px;font-size:22px;color:#1f1f1f;transform:scaleX(1.0257)">Third-Party</div><div class=t style="left:1410.59px;top:149.3px;font-size:22px;color:#1f1f1f;transform:scaleX(1.0115)">Geopolitical</div><div class=t style="left:1614.28px;top:149.3px;font-size:22px;color:#1f1f1f;transform:scaleX(1.0580)">Identity</div><div class=t style="left:1778.49px;top:149.3px;font-size:22px;color:#1f1f1f;transform:scaleX(1.0034)">Payment Fraud</div><div class=t style="left:372.7px;top:287px;font-size:26px;color:#1f1f1f;font-weight:700;transform:scaleX(0.9500)">Detection Trends</div><div class=t style="left:1724.68px;top:289px;font-size:22px;color:#1f1f1f;transform:scaleX(1.0119)">Last 30 Days</div><div class=t style="left:403.73px;top:358.8px;font-size:22px;color:#5e5e5e;transform:scaleX(1.0681)">6000</div><div class=t style="left:404.8px;top:449px;font-size:22px;color:#5e5e5e;transform:scaleX(1.0458)">4500</div><div class=t style="left:403.73px;top:553.6px;font-size:22px;color:#5e5e5e;transform:scaleX(1.0681)">3000</div><div class=t style="left:405.75px;top:659.1px;font-size:22px;color:#5e5e5e;transform:scaleX(1.0261)">1500</div><div class=t style="left:443.65px;top:763.7px;font-size:22px;color:#5e5e5e;transform:scaleX(0.9455)">0</div><div class=t style="left:504px;top:783.8px;font-size:22px;color:#5e5e5e;transform:scaleX(0.9846)">Jun 07</div><div class=t style="left:593.41px;top:783.8px;font-size:22px;color:#5e5e5e;transform:scaleX(0.9846)">Jun 09</div><div class=t style="left:685.72px;top:783.8px;font-size:22px;color:#5e5e5e;transform:scaleX(0.9094)">Jun 11</div><div class=t style="left:773.33px;top:783.8px;font-size:22px;color:#5e5e5e;transform:scaleX(0.9508)">Jun 13</div><div class=t style="left:862.94px;top:783.8px;font-size:22px;color:#5e5e5e;transform:scaleX(0.9446)">Jun 15</div><div class=t style="left:952.55px;top:783.8px;font-size:22px;color:#5e5e5e;transform:scaleX(0.9385)">Jun 17</div><div class=t style="left:1041.76px;top:783.8px;font-size:22px;color:#5e5e5e;transform:scaleX(0.9446)">Jun 19</div><div class=t style="left:1131.17px;top:783.8px;font-size:22px;color:#5e5e5e;transform:scaleX(0.9446)">Jun 21</div><div class=t style="left:1219.03px;top:783.8px;font-size:22px;color:#5e5e5e;transform:scaleX(0.9923)">Jun 23</div><div class=t style="left:1308.04px;top:783.8px;font-size:22px;color:#5e5e5e;transform:scaleX(1.0046)">Jun 25</div><div class=t style="left:1397.85px;top:783.8px;font-size:22px;color:#5e5e5e;transform:scaleX(0.9923)">Jun 27</div><div class=t style="left:1487.26px;top:783.8px;font-size:22px;color:#5e5e5e;transform:scaleX(0.9923)">Jun 29</div><div class=t style="left:1580.92px;top:783.8px;font-size:22px;color:#5e5e5e;transform:scaleX(0.9655)">Jul 01</div><div class=t style="left:1669.03px;top:783.8px;font-size:22px;color:#5e5e5e;transform:scaleX(1.0103)">Jul 03</div><div class=t style="left:1758.74px;top:783.8px;font-size:22px;color:#5e5e5e">Jul 06</div><div class=t style="left:1839.4px;top:783.8px;font-size:22px;color:#5e5e5e;transform:scaleX(1.0103)">Jul 08</div><div class=t style="left:745.9px;top:850px;font-size:22px;color:#1f1f1f">IP Address</div><div class=t style="left:909.02px;top:850px;font-size:22px;color:#1f1f1f;transform:scaleX(0.9877)">Domain</div><div class=t style="left:1040.7px;top:850px;font-size:22px;color:#1f1f1f">Hash</div><div class=t style="left:1148.93px;top:850px;font-size:22px;color:#1f1f1f;transform:scaleX(0.9341)">URL</div><div class=t style="left:1248.1px;top:850px;font-size:22px;color:#1f1f1f;transform:scaleX(1.0059)">Vulnerability</div><div class=t style="left:1425.98px;top:850px;font-size:22px;color:#1f1f1f;transform:scaleX(1.0101)">Unknown</div><div class=t style="left:372.69px;top:1011.3px;font-size:26px;color:#1f1f1f;font-weight:700;transform:scaleX(0.9544)">Detection Activity</div><div class=t style="left:637.31px;top:1013.1px;font-size:22px;color:#6b7587;transform:scaleX(0.9468)">MITRE ATT&amp;CK</div><div class=t style="left:372.41px;top:1069.9px;font-size:22px;color:#6b7587;transform:scaleX(0.9967)">MITRE ATT&amp;CK Detection Activity for</div><div class=t style="left:1555.1px;top:1011.9px;font-size:22px;color:#1f1f1f">Compact View</div><div class=t style="left:1725.59px;top:1011.9px;font-size:22px;color:#1f1f1f;transform:scaleX(1.0032)">Last 30 Days</div><div class=t style="left:397.44px;top:1151px;font-size:21.8px;color:#1f1f1f;font-weight:700;transform:scaleX(0.9607)">Resource Develop...</div><div class=t style="left:730.43px;top:1151px;font-size:21.8px;color:#1f1f1f;font-weight:700;transform:scaleX(0.9672)">Initial Access</div><div class=t style="left:1063.64px;top:1151px;font-size:21.8px;color:#1f1f1f;font-weight:700;transform:scaleX(0.9627)">Execution</div><div class=t style="left:1396.04px;top:1151px;font-size:21.8px;color:#1f1f1f;font-weight:700;transform:scaleX(0.9603)">Privilege Escalation</div><div class=t style="left:630.11px;top:1151px;font-size:22px;color:#1f1f1f;transform:scaleX(0.9918)">(3671)</div><div class=t style="left:946.46px;top:1151px;font-size:22px;color:#1f1f1f;transform:scaleX(1.0405)">(22029)</div><div class=t style="left:1285.54px;top:1151px;font-size:22px;color:#1f1f1f;transform:scaleX(0.9568)">(16516)</div><div class=t style="left:1663.58px;top:1151px;font-size:22px;color:#1f1f1f;transform:scaleX(1.0200)">(2)</div><div class=t style="left:410.8px;top:1199.9px;font-size:22px;color:#1f1f1f;transform:scaleX(1.0205)">Acquire Infrastruct...</div><div class=t style="left:639.15px;top:1199.9px;font-size:22px;color:#1f1f1f;transform:scaleX(1.0531)">(369)</div><div class=t style="left:410.8px;top:1234.1px;font-size:22px;color:#6b7587;transform:scaleX(0.9742)">T1583</div><div class=t style="left:409.8px;top:1289.45px;font-size:22px;color:#1f1f1f">Compromise Infras...</div><div class=t style="left:639.15px;top:1289.45px;font-size:22px;color:#1f1f1f;transform:scaleX(1.0531)">(883)</div><div class=t style="left:410.8px;top:1323.65px;font-size:22px;color:#6b7587;transform:scaleX(0.9742)">T1584</div><div class=t style="left:408.79px;top:1379px;font-size:22px;color:#1f1f1f;transform:scaleX(1.0066)">Develop Capabilities</div><div class=t style="left:639.96px;top:1379px;font-size:22px;color:#1f1f1f;transform:scaleX(1.0367)">(957)</div><div class=t style="left:410.8px;top:1413.2px;font-size:22px;color:#6b7587;transform:scaleX(0.9516)">T1587</div><div class=t style="left:409.79px;top:1468.55px;font-size:22px;color:#1f1f1f;transform:scaleX(1.0060)">Obtain Capabilities</div><div class=t style="left:629.29px;top:1468.55px;font-size:22px;color:#1f1f1f;transform:scaleX(1.0082)">(1462)</div><div class=t style="left:410.8px;top:1502.75px;font-size:22px;color:#6b7587;transform:scaleX(0.9677)">T1588</div><div class=t style="left:741.17px;top:1199.9px;font-size:22px;color:#1f1f1f;transform:scaleX(1.0141)">Drive-by Comprom...</div><div class=t style="left:970.63px;top:1199.9px;font-size:22px;color:#1f1f1f;transform:scaleX(1.0714)">(449)</div><div class=t style="left:743.2px;top:1234.1px;font-size:22px;color:#6b7587;transform:scaleX(0.9467)">T1189</div><div class=t style="left:741.18px;top:1289.45px;font-size:22px;color:#1f1f1f;transform:scaleX(1.0086)">Phishing</div><div class=t style="left:949.2px;top:1289.45px;font-size:22px;color:#1f1f1f">(14262)</div><div class=t style="left:743.2px;top:1323.65px;font-size:22px;color:#6b7587;transform:scaleX(0.9742)">T1566</div><div class=t style="left:1074.09px;top:1199.9px;font-size:22px;color:#1f1f1f">User Execution</div><div class=t style="left:1297.52px;top:1199.9px;font-size:22px;color:#1f1f1f;transform:scaleX(0.9767)">(4211)</div><div class=t style="left:1076.1px;top:1234.1px;font-size:22px;color:#6b7587;transform:scaleX(0.9677)">T1204</div><div class=t style="left:1409.3px;top:1199.9px;font-size:22px;color:#1f1f1f">Access Token Mani...</div><div class=t style="left:1663.78px;top:1199.9px;font-size:22px;color:#1f1f1f;transform:scaleX(1.0200)">(2)</div><div class=t style="left:1409.3px;top:1234.1px;font-size:22px;color:#6b7587;transform:scaleX(0.9667)">T1134</div>
<div style='position:absolute;left:0;top:0;width:1898.5px;height:1606px;overflow:hidden'><div class=card style='left:1717.5px;top:1190.2px'><div class=bar style='background:#f9dad9'></div></div><div class=t style="left:1728.83px;top:1151px;font-size:21.8px;color:#1f1f1f;font-weight:700;transform:scaleX(0.9663)">Defense Evasion</div><div class=t style="left:1742.3px;top:1199.9px;font-size:22px;color:#1f1f1f">Access Token Manipulation</div><div class=t style="left:1742.3px;top:1234.1px;font-size:22px;color:#6b7587;transform:scaleX(0.9667)">T1134</div></div>
</body></html>
